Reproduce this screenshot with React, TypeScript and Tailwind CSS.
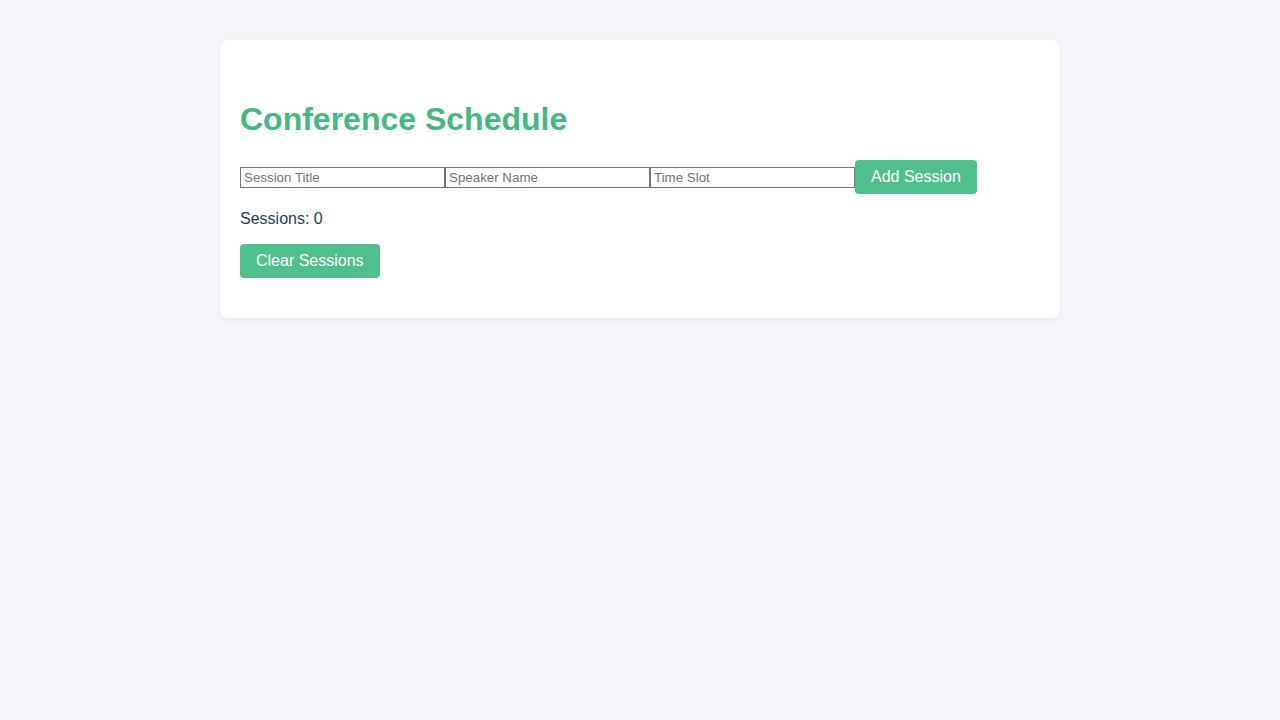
import React, { useState } from "react";

type Session = { title: string; speaker: string; time: string };

const App: React.FC = () => {
  const [sessions, setSessions] = useState<Session[]>([]);
  const [title, setTitle] = useState("");
  const [speaker, setSpeaker] = useState("");
  const [time, setTime] = useState("");

  const addSession = () => {
    if (!title || !speaker || !time) return;
    setSessions([...sessions, { title, speaker, time }]);
    setTitle("");
    setSpeaker("");
    setTime("");
  };

  return (
    <div className="min-h-screen bg-[#f5f6fa] pt-10 font-['Liberation_Sans',Arial,sans-serif] text-[#2c3e50]">
      <div className="mx-auto w-[840px] rounded-lg bg-white px-5 pt-[61px] pb-10 shadow-[0_2px_6px_rgba(0,0,0,0.06)]">
        {/* Header */}
        <h1 className="mb-[22px] text-[32px] leading-[37px] font-bold text-[#42b983]">
          Conference Schedule
        </h1>

        {/* Form row */}
        <div className="flex items-center">
          <input
            value={title}
            onChange={(e) => setTitle(e.target.value)}
            placeholder="Session Title"
            className="h-[21px] w-[205px] border border-[#767676] px-[3px] text-[13.33px] placeholder:text-[#757575]"
          />
          <input
            value={speaker}
            onChange={(e) => setSpeaker(e.target.value)}
            placeholder="Speaker Name"
            className="h-[21px] w-[205px] border border-[#767676] px-[3px] text-[13.33px] placeholder:text-[#757575]"
          />
          <input
            value={time}
            onChange={(e) => setTime(e.target.value)}
            placeholder="Time Slot"
            className="h-[21px] w-[205px] border border-[#767676] px-[3px] text-[13.33px] placeholder:text-[#757575]"
          />
          <button
            onClick={addSession}
            className="h-[34px] rounded bg-[#4fc08d] px-4 text-base text-white"
          >
            Add Session
          </button>
        </div>

        <ul>
          {sessions.map((s, i) => (
            <li key={i} className="mt-2">
              {s.title} - {s.speaker} ({s.time})
            </li>
          ))}
        </ul>

        <p className="my-4 text-base leading-[18px]">Sessions: {sessions.length}</p>

        <button
          onClick={() => setSessions([])}
          className="h-[34px] rounded bg-[#4fc08d] px-4 text-base text-white"
        >
          Clear Sessions
        </button>
      </div>
    </div>
  );
};

export default App;
